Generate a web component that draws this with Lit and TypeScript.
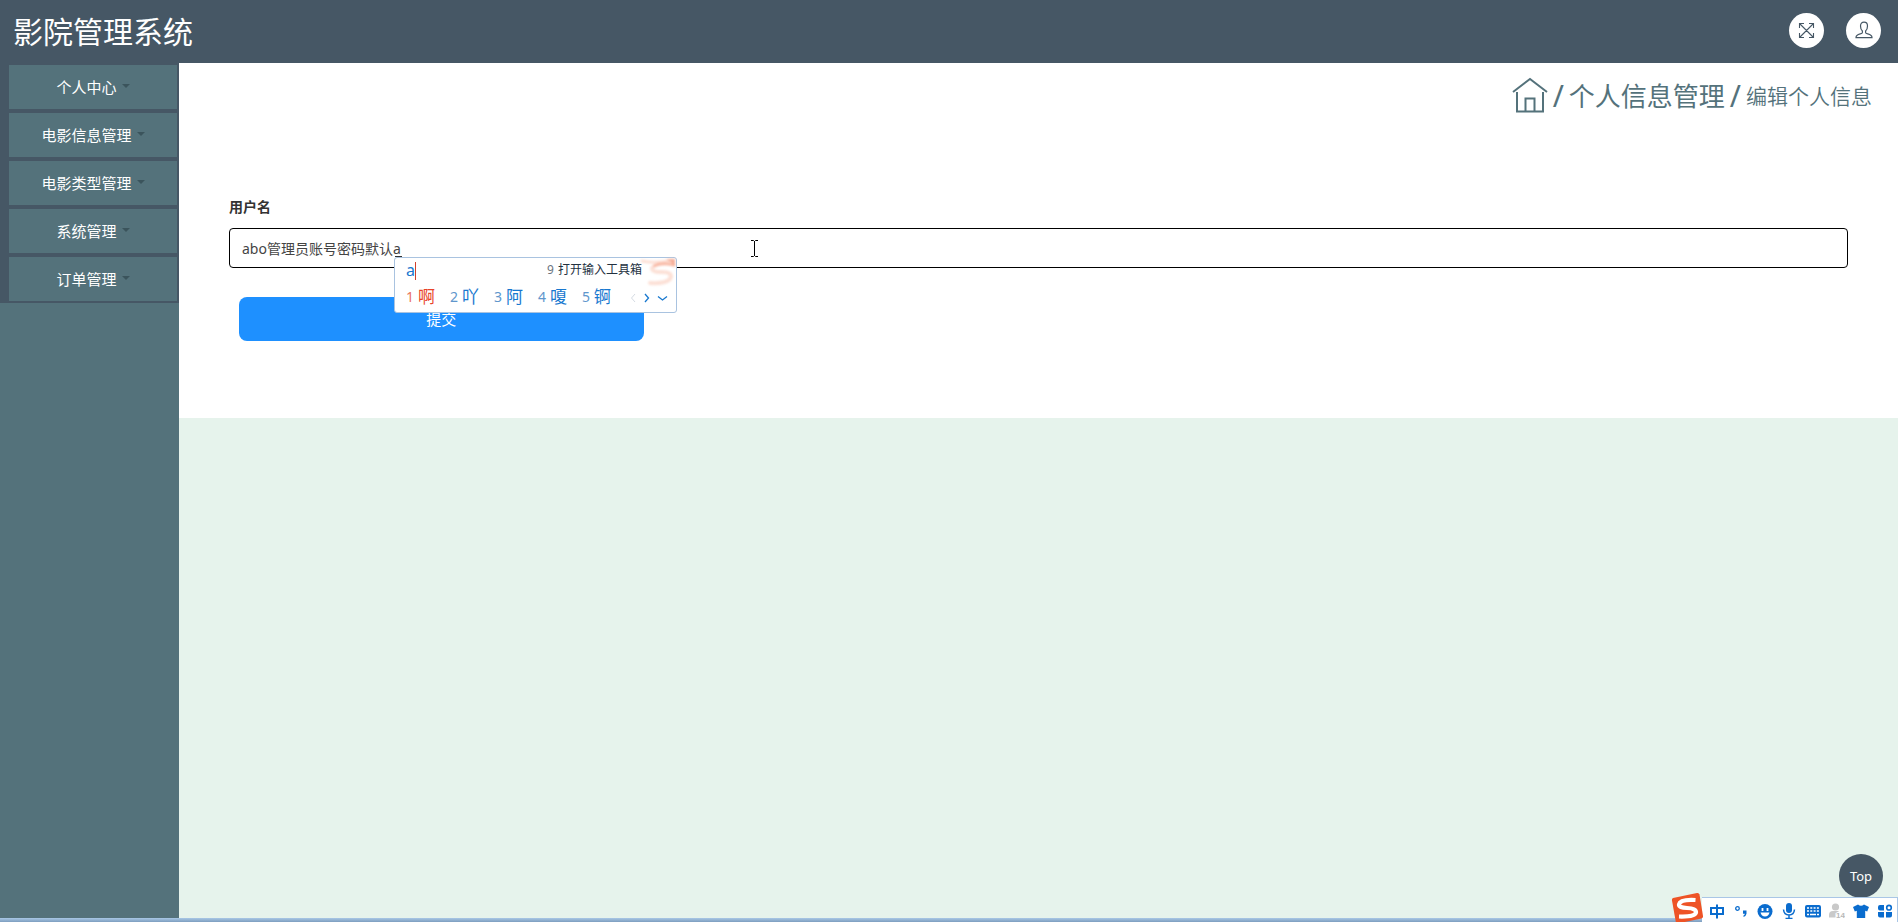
import { LitElement, html, css, svg } from "lit";
import { customElement, state } from "lit/decorators.js";

const FONT = css`"Noto Sans", "Noto Sans CJK SC", sans-serif`;

@customElement("top-header")
class TopHeader extends LitElement {
  static styles = css`
    :host {
      display: flex;
      align-items: center;
      justify-content: space-between;
      box-sizing: border-box;
      height: 63px;
      padding: 0 17px 0 13px;
      background: #465765;
      color: #fff;
      font-family: ${FONT};
    }
    .title {
      margin: 0;
      font-size: 30px;
      line-height: 44px;
      font-weight: 400;
    }
    .actions {
      display: flex;
      gap: 22px;
      padding-bottom: 3px;
    }
    .round {
      display: grid;
      place-items: center;
      width: 35px;
      height: 35px;
      padding: 0;
      border: 0;
      border-radius: 50%;
      background: #fff;
      color: #465765;
    }
  `;
  render() {
    return html`
      <h1 class="title">影院管理系统</h1>
      <div class="actions">
        <button class="round" aria-label="全屏">
          <svg width="17" height="17" viewBox="0 0 17 17" fill="none" stroke="currentColor" stroke-width="1.1">
            <path d="M2 2 15 15M15 2 2 15M1.500 6V1.500H6M11 1.500h4.500V6M15.500 11v4.500H11M6 15.500H1.500V11" />
          </svg>
        </button>
        <button class="round" aria-label="用户">
          <svg width="18" height="18" viewBox="0 0 18 18" fill="none" stroke="currentColor" stroke-width="1.2">
            <path d="M7.400 11.500V10C6.200 9 5.500 7 5.500 5 5.500 2.500 6.900 1.200 9 1.200s3.500 1.300 3.500 3.800c0 2-.7 4-1.900 5v1.500c0 .8 1 1.100 2.200 1.400 2.400.6 4.200 1.200 4.200 3.700H1c0-2.500 1.800-3.100 4.200-3.700 1.200-.3 2.200-.6 2.200-1.400Z" />
          </svg>
        </button>
      </div>
    `;
  }
}

@customElement("side-menu")
class SideMenu extends LitElement {
  static styles = css`
    :host {
      display: block;
      background: #54727b;
      font-family: ${FONT};
    }
    .list {
      display: flex;
      flex-direction: column;
      gap: 4px;
      margin: 0;
      padding: 2px 2px 2px 9px;
      list-style: none;
      background: #465765;
    }
    .item {
      display: flex;
      align-items: center;
      justify-content: center;
      gap: 5px;
      width: 100%;
      height: 44px;
      padding: 0 0 1px;
      border: 0;
      background: #54727b;
      color: #fff;
      font: 400 15px/22px ${FONT};
    }
    .caret {
      margin-bottom: 2px;
      border: 4px solid transparent;
      border-top-color: #3b545c;
      border-bottom: 0;
    }
  `;
  private items = ["个人中心", "电影信息管理", "电影类型管理", "系统管理", "订单管理"];
  render() {
    return html`<nav>
      <ul class="list">
        ${this.items.map(
          (name) => html`<li><button class="item">${name}<span class="caret"></span></button></li>`
        )}
      </ul>
    </nav>`;
  }
}

@customElement("crumb-trail")
class CrumbTrail extends LitElement {
  static styles = css`
    :host {
      display: block;
      font-family: ${FONT};
      color: #54727b;
    }
    .trail {
      display: flex;
      align-items: center;
      justify-content: flex-end;
      gap: 5px;
      height: 40px;
      font-size: 26px;
      line-height: 38px;
    }
    a {
      color: inherit;
      text-decoration: none;
    }
    .home {
      display: flex;
      padding-bottom: 2px;
    }
    .slash {
      font-size: 30px;
    }
    .current {
      font-size: 21px;
      font-weight: 350;
    }
  `;
  render() {
    return html`<nav class="trail">
      <a class="home" href="#" aria-label="首页">
        <svg width="36" height="36" viewBox="0 0 36 36" fill="none" stroke="currentColor" stroke-width="2">
          <path d="M1 15 18 2l17 13M5 15v19.500h26V15M13.500 34V21.500h9V34" />
        </svg>
      </a>
      <span class="slash">/</span>
      <a href="#">个人信息管理</a>
      <span class="slash">/</span>
      <span class="current">编辑个人信息</span>
    </nav>`;
  }
}

@customElement("ime-panel")
class ImePanel extends LitElement {
  static styles = css`
    :host {
      display: flex;
      flex-direction: column;
      box-sizing: border-box;
      width: 283px;
      height: 56px;
      padding: 0 8px 0 11px;
      border: 1px solid #a9c3e0;
      border-radius: 3px;
      background: #fff;
      color: #1878cf;
      font-family: ${FONT};
    }
    .mark {
      position: absolute;
      top: -2px;
      left: 0;
      width: 7px;
      height: 1px;
      background: #333;
    }
    .swirl {
      position: absolute;
      top: 0;
      right: 0;
      filter: blur(1px);
    }
    .row {
      display: flex;
      align-items: center;
      justify-content: space-between;
    }
    .typed {
      height: 24px;
      padding-right: 26px;
      font-size: 16px;
      line-height: 24px;
    }
    .caret {
      display: inline-block;
      width: 1px;
      height: 18px;
      background: #d0402c;
      vertical-align: -4px;
    }
    .tool {
      color: #23313f;
      font-size: 12px;
    }
    .tool .num {
      margin-right: 4px;
      color: #6a7480;
    }
    .picks {
      height: 30px;
    }
    .list {
      display: flex;
      gap: 15px;
      margin: 0;
      padding: 0;
      list-style: none;
    }
    .pick {
      display: flex;
      align-items: center;
      gap: 4px;
      font-size: 17px;
      line-height: 26px;
    }
    .pick .num {
      color: #6096cc;
      font-size: 14px;
    }
    .first {
      color: #e8432a;
    }
    .pick.first .num {
      color: #ea7462;
    }
  `;
  private picks = ["啊", "吖", "阿", "嗄", "锕"];
  render() {
    return html`
      <span class="mark"></span>
      <svg class="swirl" width="38" height="32" viewBox="0 0 38 32" fill="none" stroke-linecap="round">
        <path d="M4 3Q18 6 34 2" stroke="#fde0d6" stroke-width="3" />
        <path d="M16 8Q24 4 36 7" stroke="#f8b8a4" stroke-width="3" />
        <path d="M14 10q0 4 9 4 13 0 9 7-5 5-20 4" stroke="#fce0d6" stroke-width="4" />
        <path d="M28 1h9v8q-3-5-9-8Z" fill="#f6ae98" />
      </svg>
      <div class="row typed">
        <span>a<span class="caret"></span></span>
        <span class="tool"><span class="num">9</span>打开输入工具箱</span>
      </div>
      <div class="row picks">
        <ol class="list">
          ${this.picks.map(
            (c, i) => html`<li class="pick ${i === 0 ? "first" : ""}"><span class="num">${i + 1}</span>${c}</li>`
          )}
        </ol>
        <svg width="38" height="12" viewBox="0 0 38 12" fill="none" stroke="#1878cf" stroke-width="1.300">
          <path d="M5 3 1.500 7 5 11" stroke="#d5dbe3" stroke-width="1" />
          <path d="m15 3 3.500 4L15 11M28 5.500l4.500 3.500 4.500-3.500" />
        </svg>
      </div>
    `;
  }
}

@customElement("ime-bar")
class ImeBar extends LitElement {
  static styles = css`
    :host {
      display: flex;
      align-items: center;
      box-sizing: border-box;
      height: 25px;
      border-top: 1px solid #a9c6e6;
      border-right: 1px solid #a9c6e6;
      background: #fff;
      color: #0a6cce;
    }
    .logo {
      margin: -5px 0 0 -31px;
      height: 31px;
    }
    .tools {
      display: flex;
      gap: 8px;
      padding: 1px 4px 0 5px;
    }
    .badge {
      font: 700 8px/8px "Liberation Sans", sans-serif;
      fill: #b8b8b8;
      stroke: #fff;
      stroke-width: 2px;
      paint-order: stroke;
    }
  `;
  private icons = [
    svg`<path d="M2 5h12v6H2ZM8 1.500v14" fill="none" stroke="currentColor" stroke-width="2"/>`,
    svg`<circle cx="4.500" cy="5.500" r="1.800" fill="none" stroke="currentColor" stroke-width="1.300"/><path d="M10 7.500h3.500v3.200q-.5 2.500-3 3.300v-1.500q1.400-.6 1.300-1.800H10Z" fill="currentColor"/>`,
    svg`<circle cx="8" cy="8.500" r="7.500" fill="currentColor"/><path d="M5.500 5v3M10.500 5v3" stroke="#fff" stroke-width="1.800"/><path d="M3.500 9.500h9q-1 4-4.500 4t-4.500-4Z" fill="#fff"/>`,
    svg`<rect x="5" y="0" width="6" height="10" rx="3" fill="currentColor"/><path d="M2.500 6.500Q3 12 8 12t5.500-5.500M8 12v3M4.500 15.500h7" fill="none" stroke="currentColor" stroke-width="1.500"/>`,
    svg`<rect x="0" y="2" width="16" height="12.500" rx="2" fill="currentColor"/><path d="M2 5h12M2 8h12" stroke="#fff" stroke-width="1.700" stroke-dasharray="2 1.300"/><path d="M2 11.500h2M5 11.500h6M12 11.500h2" stroke="#fff" stroke-width="1.700"/>`,
    svg`<circle cx="6.500" cy="4" r="3.600" fill="#c9c9c9"/><path d="M0 14.500V12q0-4 4-4h5.500v6.500Z" fill="#c9c9c9"/><text class="badge" x="7" y="15">14</text>`,
    svg`<path d="M5 1.500q3 2.500 6 0L16 4l-1.800 4.500-2-.7V15H3.800V7.800l-2 .7L0 4Z" fill="currentColor"/>`,
    svg`<path d="M3 2h4v5.500H3q-2 0-2-2V4q0-2 2-2ZM1 9h6v5.500H3q-2 0-2-2ZM9 9h6v3.500q0 2-2 2H9Z" fill="currentColor"/><circle cx="12" cy="4.700" r="2.300" fill="none" stroke="currentColor" stroke-width="1.600"/>`,
  ];
  render() {
    return html`
      <svg class="logo" width="33" height="31" viewBox="0 0 33 31">
        <path d="M2 6 26 1q2-.3 2.500 1.500L32 24q.2 2-1.500 2.500L9 31H5L1 8.500Q.7 6.500 2 6Z" fill="#ee5326" />
        <path d="M24.500 8Q9 7 8 12.500q-.3 3.200 8 3.500 9.500.3 9 4.500-1 4.500-17 4" fill="none" stroke="#fff" stroke-width="4.200" />
      </svg>
      <div class="tools">
        ${this.icons.map((i) => html`<svg width="16" height="16" viewBox="0 0 16 16">${i}</svg>`)}
      </div>
    `;
  }
}

@customElement("app-root")
class AppRoot extends LitElement {
  static styles = css`
    :host {
      display: flex;
      flex-direction: column;
      position: relative;
      min-height: 100vh;
      font-family: ${FONT};
      color: #333;
    }
    .body {
      flex: 1;
      display: grid;
      grid-template-columns: 179px 1fr;
    }
    .main {
      background: #e6f3ec;
    }
    .panel {
      background: #fff;
      padding: 13px 26px 76px 50px;
    }
    .form {
      display: flex;
      flex-direction: column;
      padding: 79px 24px 0 0;
    }
    .label {
      margin-bottom: 10px;
      font-size: 14px;
      line-height: 23px;
      font-weight: 600;
    }
    .field {
      position: relative;
    }
    .input {
      display: block;
      box-sizing: border-box;
      width: 100%;
      height: 40px;
      padding: 0 12px 1px;
      border: 1px solid #000;
      border-radius: 4px;
      background: #fff;
      color: #444;
      font: 400 14px/20px ${FONT};
      outline: 0;
    }
    .popup {
      position: absolute;
      top: 29px;
      left: 165px;
      z-index: 2;
    }
    .pointer {
      position: absolute;
      top: 12px;
      left: 521px;
    }
    .submit {
      align-self: flex-start;
      width: 25%;
      height: 44px;
      margin: 29px 0 1px 10px;
      padding: 0;
      border: 0;
      border-radius: 8px;
      background: #1e90ff;
      color: #fff;
      font: 400 15px/22px ${FONT};
    }
    .strip {
      position: absolute;
      inset: auto 0 0 0;
      height: 4px;
      background: linear-gradient(#a9c8e6, #7d9ebf);
    }
    .top {
      position: absolute;
      right: 15px;
      bottom: 24px;
      width: 44px;
      height: 44px;
      padding: 0;
      border: 0;
      border-radius: 50%;
      background: #465765;
      color: #fff;
      font: 400 13px/20px ${FONT};
    }
    .ime {
      position: absolute;
      right: 0;
      bottom: 0;
    }
  `;
  @state() private value = "abo管理员账号密码默认a";
  private onInput(e: Event) {
    this.value = (e.target as HTMLInputElement).value;
  }
  render() {
    return html`
      <top-header></top-header>
      <div class="body">
        <side-menu></side-menu>
        <main class="main">
          <section class="panel">
            <crumb-trail></crumb-trail>
            <form class="form" @submit=${(e: Event) => e.preventDefault()}>
              <label class="label" for="username">用户名</label>
              <div class="field">
                <input class="input" id="username" type="text" .value=${this.value} @input=${this.onInput} />
                <svg class="pointer" width="9" height="17" viewBox="0 0 9 17" fill="none" stroke="#000">
                  <path d="M1 .5h2.500l1 1 1-1H8M4.500 1v15M1 16.500h2.500l1-1 1 1H8" />
                </svg>
                <ime-panel class="popup"></ime-panel>
              </div>
              <button class="submit" type="submit">提交</button>
            </form>
          </section>
        </main>
      </div>
      <div class="strip"></div>
      <button class="top">Top</button>
      <ime-bar class="ime"></ime-bar>
    `;
  }
}
